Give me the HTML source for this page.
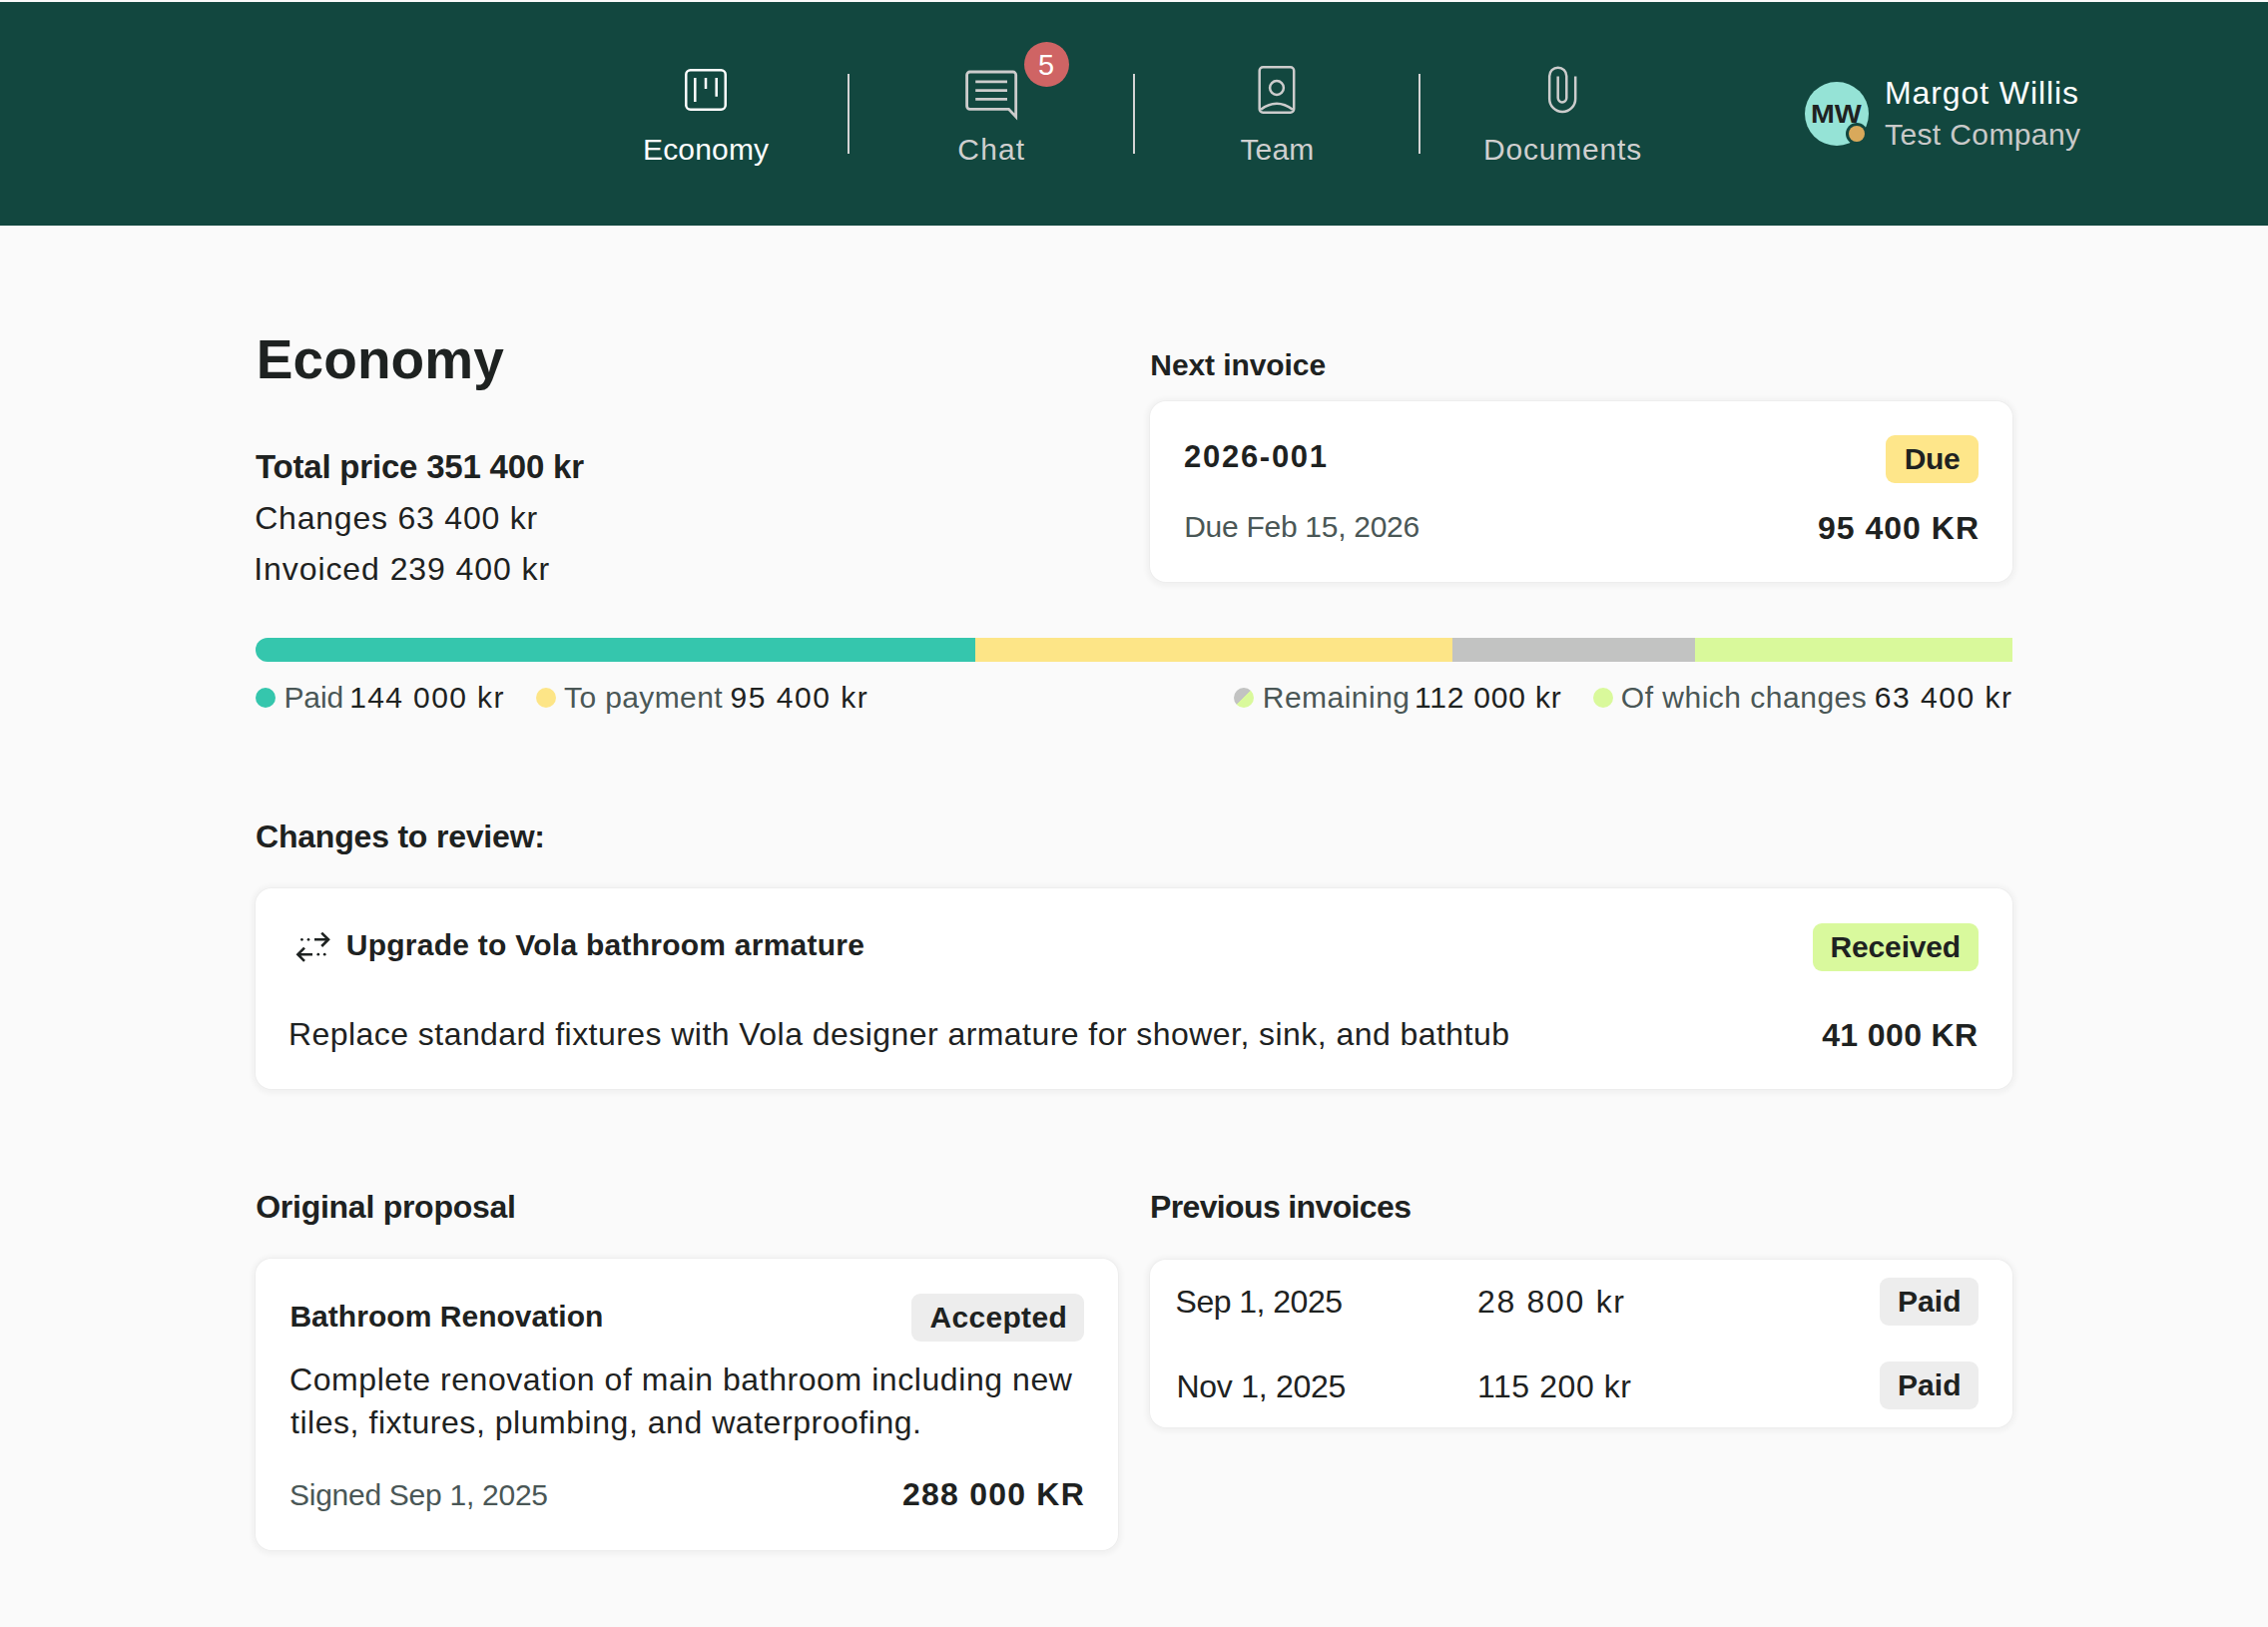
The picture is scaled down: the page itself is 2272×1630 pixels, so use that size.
<!DOCTYPE html>
<html><head><meta charset="utf-8"><title>Economy</title><style>
html,body{margin:0;padding:0;}
body{width:2272px;height:1630px;overflow:hidden;background:#fafafa;position:relative;font-family:"Liberation Sans",sans-serif;}
.t{position:absolute;white-space:nowrap;line-height:0;}
.hdr{position:absolute;left:0;top:2px;width:2272px;height:224px;background:#12473f;}
.card{position:absolute;background:#fff;border-radius:16px;box-shadow:0 0 0 1px rgba(0,0,0,0.02),0 1px 5px 4px rgba(0,0,0,0.035);}
.badge{position:absolute;border-radius:9px;}
.div{position:absolute;top:74px;width:2px;height:80px;background:#d3d3d3;}
.seg{position:absolute;top:639px;height:24px;}
.dot{position:absolute;top:689px;width:20px;height:20px;border-radius:50%;}
</style></head>
<body>

<div class="hdr"></div>
<div class="div" style="left:849px"></div>
<div class="div" style="left:1135px"></div>
<div class="div" style="left:1421px"></div>
<svg style="position:absolute;left:0;top:0" width="2272" height="230" viewBox="0 0 2272 230">
  <g fill="none" stroke="#ffffff" stroke-width="2.5">
    <rect x="687.25" y="70.25" width="39.5" height="39.5" rx="4.5"/>
    <path d="M696.3 78V102M707 78V89M717.7 78V96.8"/>
  </g>
  <g fill="none" stroke="#cccccc" stroke-width="2.8" stroke-linejoin="miter">
    <path d="M1010.5 109.3H971.6a3 3 0 0 1-3-3V75a3 3 0 0 1 3-3h43.1a3 3 0 0 1 3 3V117Z"/>
    <path d="M977.2 81.9H1009M977.2 90.6H1009M977.2 99.3H1009"/>
  </g>
  <g fill="none" stroke="#cccccc" stroke-width="2.5">
    <rect x="1261.7" y="67.3" width="34.5" height="45.4" rx="3.5"/>
    <circle cx="1279" cy="88" r="6.9"/>
    <path d="M1263 109.8Q1279 97.6 1295 109.8"/>
  </g>
  <g fill="none" stroke="#cccccc" stroke-width="2.5">
    <path d="M1578.2 76.6V99A13 13 0 0 1 1552.2 99V76.2A8.55 8.55 0 0 1 1569.3 76.2V98.1A4.3 4.3 0 0 1 1560.7 98.1V76.6"/>
  </g>
  <circle cx="1048.5" cy="64.5" r="22.5" fill="#cf6464"/>
  <circle cx="1840" cy="114" r="32" fill="#95e3d6"/>
  <circle cx="1860" cy="134" r="11" fill="#12473f"/>
  <circle cx="1860" cy="134" r="8" fill="#d9a95b"/>
</svg>

<div class="card" style="left:1152px;top:402px;width:864px;height:181px"></div>
<div class="badge" style="left:1889px;top:436px;width:93px;height:48px;background:#fee68a"></div>

<div class="seg" style="left:256px;width:721px;background:#35c6ad;border-radius:12px 0 0 12px"></div>
<div class="seg" style="left:977px;width:478px;background:#fde587"></div>
<div class="seg" style="left:1455px;width:243px;background:#c2c3c2"></div>
<div class="seg" style="left:1698px;width:318px;background:#d9f99b"></div>
<div class="dot" style="left:256px;background:#35c6ad"></div>
<div class="dot" style="left:537px;background:#fde587"></div>
<div class="dot" style="left:1236px;background:linear-gradient(135deg,#c2c3c2 50%,#d9f99b 50%)"></div>
<div class="dot" style="left:1596px;background:#d9f99b"></div>

<div class="card" style="left:256px;top:890px;width:1760px;height:201px"></div>
<div class="badge" style="left:1816px;top:925px;width:166px;height:48px;background:#d9f99d"></div>
<svg style="position:absolute;left:290px;top:928px" width="46" height="42" viewBox="290 928 46 42">
  <g fill="none" stroke="#1e2221" stroke-width="2.6">
    <path d="M315 941.3H329.5M322.2 934.6L329 941.3L322.2 948"/>
    <path d="M313 956.2H298.6M305 949.6L298.4 956.2L305 962.8"/>
  </g>
  <g fill="#1e2221">
    <circle cx="302.4" cy="941.3" r="1.35"/><circle cx="309" cy="941.3" r="1.35"/>
    <circle cx="318.8" cy="956.2" r="1.35"/><circle cx="325.2" cy="956.2" r="1.35"/>
  </g>
</svg>

<div class="card" style="left:256px;top:1261px;width:864px;height:292px"></div>
<div class="badge" style="left:913px;top:1296px;width:173px;height:48px;background:#ededed"></div>

<div class="card" style="left:1152px;top:1262px;width:864px;height:168px"></div>
<div class="badge" style="left:1883px;top:1280px;width:99px;height:48px;background:#ededed"></div>
<div class="badge" style="left:1883px;top:1364px;width:99px;height:48px;background:#ededed"></div>

<div class="t" style="left:644.00px;top:150.30px;font-size:30px;font-weight:400;color:#ffffff;letter-spacing:0.163px">Economy</div>
<div class="t" style="left:959.36px;top:150.00px;font-size:30px;font-weight:400;color:#cfcfcf;letter-spacing:1.142px">Chat</div>
<div class="t" style="left:1242.40px;top:150.00px;font-size:30px;font-weight:400;color:#cfcfcf;letter-spacing:0.150px">Team</div>
<div class="t" style="left:1486.00px;top:150.00px;font-size:30px;font-weight:400;color:#cfcfcf;letter-spacing:0.809px">Documents</div>
<div class="t" style="left:1040.00px;top:65.20px;font-size:29px;font-weight:400;color:#ffffff;letter-spacing:0.000px">5</div>
<div class="t" style="left:1814.04px;top:113.80px;font-size:26px;font-weight:700;color:#1e2221;transform:scaleX(1.1009);transform-origin:0 0">MW</div>
<div class="t" style="left:1888.00px;top:92.70px;font-size:32px;font-weight:400;color:#ffffff;letter-spacing:0.907px">Margot Willis</div>
<div class="t" style="left:1888.00px;top:134.70px;font-size:30px;font-weight:400;color:#c9c9c9;letter-spacing:0.384px">Test Company</div>
<div class="t" style="left:256.80px;top:359.80px;font-size:55px;font-weight:700;color:#1e2221;letter-spacing:0.083px">Economy</div>
<div class="t" style="left:256.00px;top:468.40px;font-size:33px;font-weight:700;color:#1e2221;letter-spacing:-0.201px">Total price 351 400 kr</div>
<div class="t" style="left:255.20px;top:519.00px;font-size:32px;font-weight:400;color:#1e2221;letter-spacing:0.788px">Changes 63 400 kr</div>
<div class="t" style="left:254.20px;top:569.90px;font-size:32px;font-weight:400;color:#1e2221;letter-spacing:0.929px">Invoiced 239 400 kr</div>
<div class="t" style="left:1152.32px;top:366.00px;font-size:30px;font-weight:700;color:#1e2221;letter-spacing:-0.085px">Next invoice</div>
<div class="t" style="left:1186.00px;top:458.00px;font-size:31px;font-weight:700;color:#1e2221;letter-spacing:1.718px">2026-001</div>
<div class="t" style="left:1907.80px;top:460.30px;font-size:30px;font-weight:700;color:#1e2221;letter-spacing:-0.350px">Due</div>
<div class="t" style="left:1186.20px;top:528.00px;font-size:30px;font-weight:400;color:#4a5756;letter-spacing:-0.277px">Due Feb 15, 2026</div>
<div class="t" style="left:1821.00px;top:528.70px;font-size:32px;font-weight:700;color:#1e2221;letter-spacing:1.005px">95 400 KR</div>
<div class="t" style="left:284.40px;top:698.90px;font-size:30px;font-weight:400;color:#4a5756;letter-spacing:-0.092px">Paid</div>
<div class="t" style="left:350.20px;top:698.90px;font-size:30px;font-weight:400;color:#1e2221;letter-spacing:1.383px">144 000 kr</div>
<div class="t" style="left:565.00px;top:698.90px;font-size:30px;font-weight:400;color:#4a5756;letter-spacing:0.389px">To payment</div>
<div class="t" style="left:731.60px;top:698.90px;font-size:30px;font-weight:400;color:#1e2221;letter-spacing:1.513px">95 400 kr</div>
<div class="t" style="left:1264.80px;top:698.90px;font-size:30px;font-weight:400;color:#4a5756;letter-spacing:0.475px">Remaining</div>
<div class="t" style="left:1417.00px;top:698.90px;font-size:30px;font-weight:400;color:#1e2221;letter-spacing:0.803px">112 000 kr</div>
<div class="t" style="left:1623.80px;top:698.90px;font-size:30px;font-weight:400;color:#4a5756;letter-spacing:0.500px">Of which changes</div>
<div class="t" style="left:1877.80px;top:698.90px;font-size:30px;font-weight:400;color:#1e2221;letter-spacing:1.513px">63 400 kr</div>
<div class="t" style="left:256.00px;top:838.00px;font-size:32px;font-weight:700;color:#1e2221;letter-spacing:-0.202px">Changes to review:</div>
<div class="t" style="left:346.80px;top:946.80px;font-size:30px;font-weight:700;color:#1e2221;letter-spacing:0.250px">Upgrade to Vola bathroom armature</div>
<div class="t" style="left:1833.60px;top:949.00px;font-size:30px;font-weight:700;color:#1e2221;letter-spacing:-0.168px">Received</div>
<div class="t" style="left:289.00px;top:1036.00px;font-size:32px;font-weight:400;color:#1e2221;letter-spacing:0.445px">Replace standard fixtures with Vola designer armature for shower, sink, and bathtub</div>
<div class="t" style="left:1825.20px;top:1037.10px;font-size:32px;font-weight:700;color:#1e2221;letter-spacing:0.380px">41 000 KR</div>
<div class="t" style="left:256.20px;top:1209.00px;font-size:32px;font-weight:700;color:#1e2221;letter-spacing:-0.260px">Original proposal</div>
<div class="t" style="left:1152.00px;top:1209.00px;font-size:32px;font-weight:700;color:#1e2221;letter-spacing:-0.635px">Previous invoices</div>
<div class="t" style="left:290.40px;top:1318.50px;font-size:30px;font-weight:700;color:#1e2221;letter-spacing:0.036px">Bathroom Renovation</div>
<div class="t" style="left:931.40px;top:1320.20px;font-size:30px;font-weight:700;color:#1e2221;letter-spacing:0.332px">Accepted</div>
<div class="t" style="left:290.00px;top:1381.90px;font-size:32px;font-weight:400;color:#1e2221;letter-spacing:0.570px">Complete renovation of main bathroom including new</div>
<div class="t" style="left:291.00px;top:1425.10px;font-size:32px;font-weight:400;color:#1e2221;letter-spacing:0.538px">tiles, fixtures, plumbing, and waterproofing.</div>
<div class="t" style="left:290.00px;top:1497.60px;font-size:30px;font-weight:400;color:#4a5756;letter-spacing:-0.268px">Signed Sep 1, 2025</div>
<div class="t" style="left:904.00px;top:1497.00px;font-size:32px;font-weight:700;color:#1e2221;letter-spacing:1.222px">288 000 KR</div>
<div class="t" style="left:1177.60px;top:1304.30px;font-size:32px;font-weight:400;color:#1e2221;letter-spacing:-0.524px">Sep 1, 2025</div>
<div class="t" style="left:1480.00px;top:1304.30px;font-size:32px;font-weight:400;color:#1e2221;letter-spacing:1.695px">28 800 kr</div>
<div class="t" style="left:1178.40px;top:1388.50px;font-size:32px;font-weight:400;color:#1e2221;letter-spacing:-0.256px">Nov 1, 2025</div>
<div class="t" style="left:1480.00px;top:1388.50px;font-size:32px;font-weight:400;color:#1e2221;letter-spacing:0.569px">115 200 kr</div>
<div class="t" style="left:1901.00px;top:1304.00px;font-size:30px;font-weight:700;color:#1e2221;letter-spacing:0.075px">Paid</div>
<div class="t" style="left:1901.00px;top:1388.00px;font-size:30px;font-weight:700;color:#1e2221;letter-spacing:0.075px">Paid</div>
</body></html>
